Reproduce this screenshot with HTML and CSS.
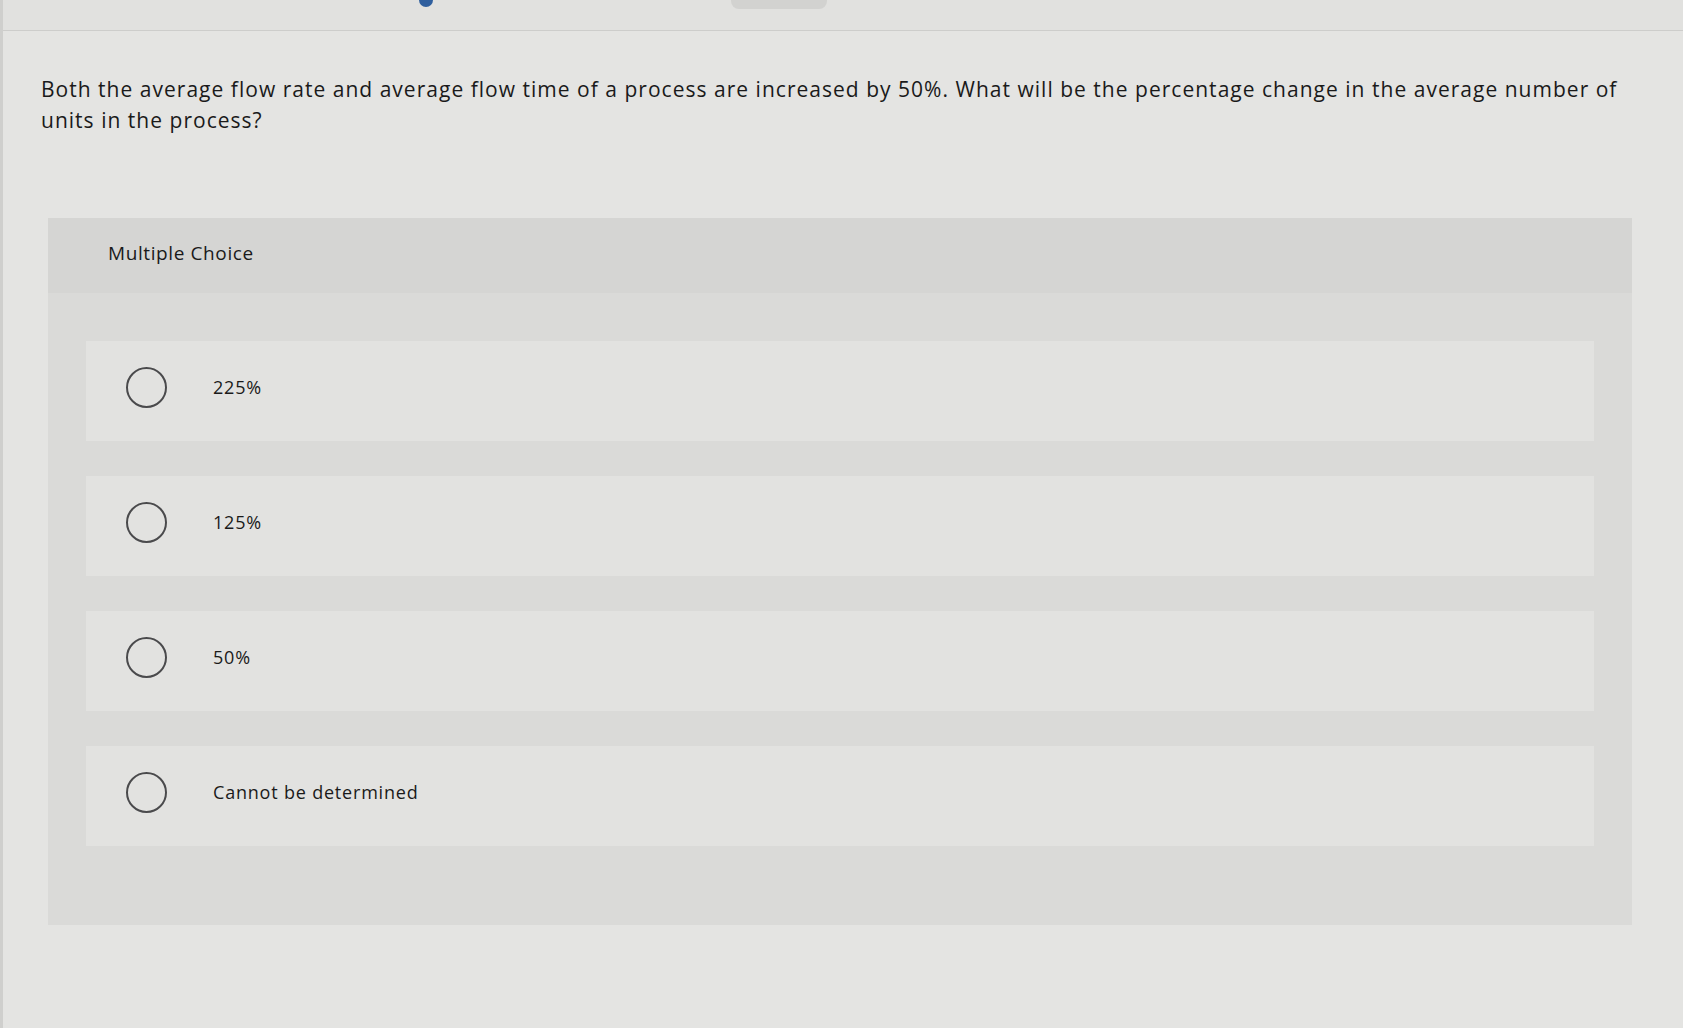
FILE: index.html
```html
<!DOCTYPE html>
<html lang="en">
<head>
<meta charset="utf-8">
<title>Multiple Choice</title>
<link rel="stylesheet" href="styles.css">
</head>
<body>
  <div class="topbar">
    <span class="dot"></span>
    <span class="tab"></span>
  </div>
  <main class="page">
    <p class="question">Both the average flow rate and average flow time of a process are increased by 50%. What will be the percentage change in the average number of units in the process?</p>
    <section class="card">
      <div class="card-header">Multiple Choice</div>
      <div class="options">
        <label class="option"><span class="radio"></span><span class="label">225%</span></label>
        <label class="option"><span class="radio"></span><span class="label">125%</span></label>
        <label class="option"><span class="radio"></span><span class="label">50%</span></label>
        <label class="option"><span class="radio"></span><span class="label">Cannot be determined</span></label>
      </div>
    </section>
  </main>
</body>
</html>
```

FILE: styles.css
```css
* { box-sizing: border-box; }

html, body {
  margin: 0;
  padding: 0;
}

body {
  background: #e4e4e2;
  font-family: "Open Sans", Lato, "Liberation Sans", sans-serif;
  color: #1a1a1a;
  height: 1028px;
  overflow: hidden;
  border-left: 3px solid #cfcfcd;
}

.topbar {
  height: 31px;
  background: #e1e1df;
  border-bottom: 1px solid #cdcdcb;
  display: flex;
  align-items: flex-start;
  padding-left: 416px;
}

.dot {
  width: 14px;
  height: 7px;
  background: #2f5f9e;
  border-radius: 0 0 7px 7px;
}

.tab {
  margin-left: 298px;
  width: 96px;
  height: 9px;
  background: #d2d2d0;
  border-radius: 0 0 8px 8px;
}

.page {
  padding: 0 10px 0 38px;
}

.question {
  margin: 43px 0 0;
  font-size: 21px;
  line-height: 31px;
  letter-spacing: 1.02px;
  max-width: 1628px;
}

.card {
  margin: 82px 41px 0 7px;
  background: #dadad8;
}

.card-header {
  height: 75px;
  background: #d5d5d3;
  display: flex;
  align-items: center;
  padding-left: 60px;
  font-size: 19px;
  letter-spacing: 0.6px;
  padding-bottom: 6px;
}

.options {
  display: flex;
  flex-direction: column;
  gap: 35px;
  padding: 48px 38px 79px 38px;
}

.option {
  height: 100px;
  background: #e2e2e0;
  display: flex;
  align-items: center;
  padding-left: 40px;
  padding-bottom: 8px;
}

.radio {
  width: 41px;
  height: 41px;
  border: 2px solid #4a4a4c;
  border-radius: 50%;
  flex: none;
}

.label {
  margin-left: 46px;
  font-size: 18px;
  letter-spacing: 0.8px;
}
```
